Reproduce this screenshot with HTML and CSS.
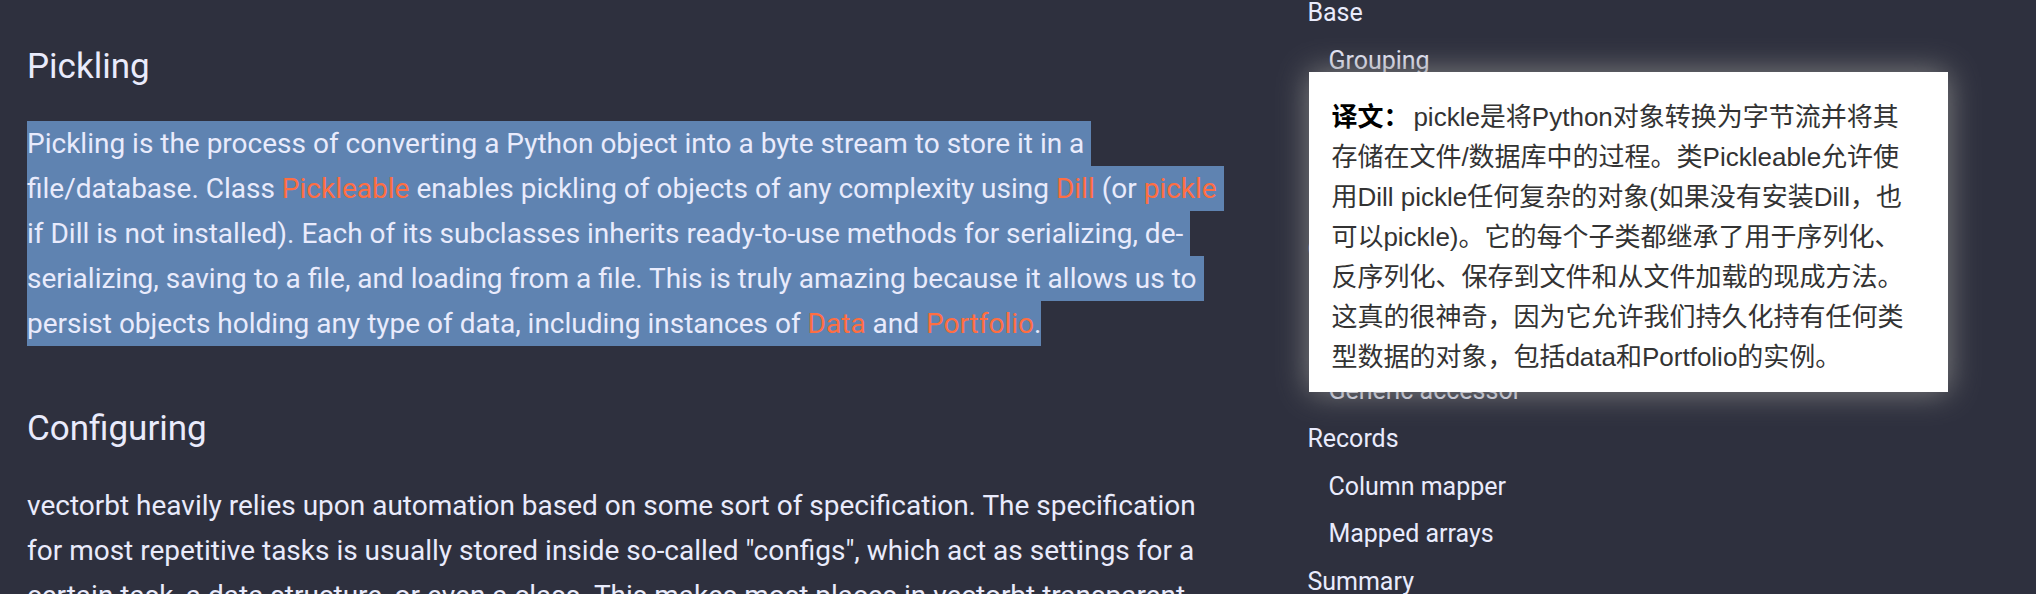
FILE: index.html
```html
<!DOCTYPE html>
<html lang="en">
<head>
<meta charset="utf-8">
<title>Pickling</title>
<link rel="stylesheet" href="styles.css">
</head>
<body>
<div class="page">
  <main class="article">
    <h3>Pickling</h3>
    <p><mark class="picked picked-run">Pickling is the process of converting a Python object into a byte stream to store it in a file/database. Class <a href="#pickleable">Pickleable</a> enables pickling of objects of any complexity using <a href="#dill">Dill</a> (or <a href="#pickle">pickle</a> if Dill is not installed). Each of its subclasses inherits ready-to-use methods for serializing, de-serializing, saving to a file, and loading from a file. This is truly amazing because it allows us to</mark> <mark class="picked">persist objects holding any type of data, including instances of <a href="#data">Data</a> and <a href="#portfolio">Portfolio</a>.</mark></p>
    <h3>Configuring</h3>
    <p>vectorbt heavily relies upon automation based on some sort of specification. The specification for most repetitive tasks is usually stored inside so-called "configs", which act as settings for a certain task, a data structure, or even a class. This makes most places in vectorbt transparent</p>
  </main>
  <aside class="side">
    <nav class="toc" aria-label="Table of contents">
      <ul>
        <li class="group group-base"><a href="#base">Base</a>
          <ul><li><a href="#grouping">Grouping</a></li></ul>
        </li>
        <li class="group group-generic"><a href="#generic">Generic</a>
          <ul><li><a href="#accessor">Generic accessor</a></li></ul>
        </li>
        <li class="group"><a href="#records">Records</a>
          <ul>
            <li><a href="#mapper">Column mapper</a></li>
            <li><a href="#arrays">Mapped arrays</a></li>
          </ul>
        </li>
        <li class="group"><a href="#summary">Summary</a></li>
      </ul>
    </nav>
    <div class="translation" lang="zh-CN"><b>译文：</b>pickle是将Python对象转换为字节流并将其存储在文件/数据库中的过程。类Pickleable允许使用Dill pickle任何复杂的对象(如果没有安装Dill，也可以pickle)。它的每个子类都继承了用于序列化、反序列化、保存到文件和从文件加载的现成方法。这真的很神奇，因为它允许我们持久化持有任何类型数据的对象，包括data和Portfolio的实例。</div>
  </aside>
</div>
</body>
</html>
```
FILE: styles.css
```css
* {
  box-sizing: border-box;
}

body {
  margin: 0;
  height: 100vh;
  overflow: hidden;
  background: #2e303e;
  color: #e9ebfc;
  font-family: Roboto, "Liberation Sans", sans-serif;
}

.page {
  display: grid;
  grid-template-columns: minmax(0, 5fr) minmax(0, 3fr);
  gap: 66px;
  padding-left: 27px;
}

.article {
  padding: 40px 10px 0 0;
  font-size: 28px;
  line-height: 45px;
}

.article h3 {
  margin: 56px 0 28px;
  font-size: 35px;
  font-weight: 400;
  line-height: 53px;
}

.article h3:first-child {
  margin-top: 0;
}

.article p {
  margin: 0;
}

.article a {
  color: #ff6e42;
  text-decoration: none;
}

.picked {
  padding: 6px 0;
  background: #5f83b1;
  color: inherit;
}

/* the highlight runs one space past the end of each wrapped line */
.picked-run {
  padding-right: 7px;
  -webkit-box-decoration-break: clone;
  box-decoration-break: clone;
}

.side {
  position: relative;
}

.toc {
  margin-top: -11px;
  font-size: 25px;
  line-height: 47px;
}

.toc ul {
  margin: 0;
  padding: 0;
  list-style: none;
}

.toc ul ul {
  margin: 1px 0;
  padding-left: 21px;
}

.toc a {
  display: block;
  color: inherit;
  text-decoration: none;
}

.group-base {
  min-height: 237px;
}

.group-generic {
  display: flex;
  flex-direction: column;
  justify-content: space-between;
  min-height: 189px;
}

.translation {
  position: absolute;
  top: 72px;
  left: 2px;
  right: 88px;
  padding: 25px 30px 15px 22px;
  background: #fff;
  box-shadow: 0 0 30px #838383;
  color: #333;
  font: 26px/40px "Liberation Sans", "Noto Sans CJK SC", sans-serif;
  text-spacing-trim: space-all;
}

.translation b {
  margin-right: 4px;
  color: #000;
}
```
